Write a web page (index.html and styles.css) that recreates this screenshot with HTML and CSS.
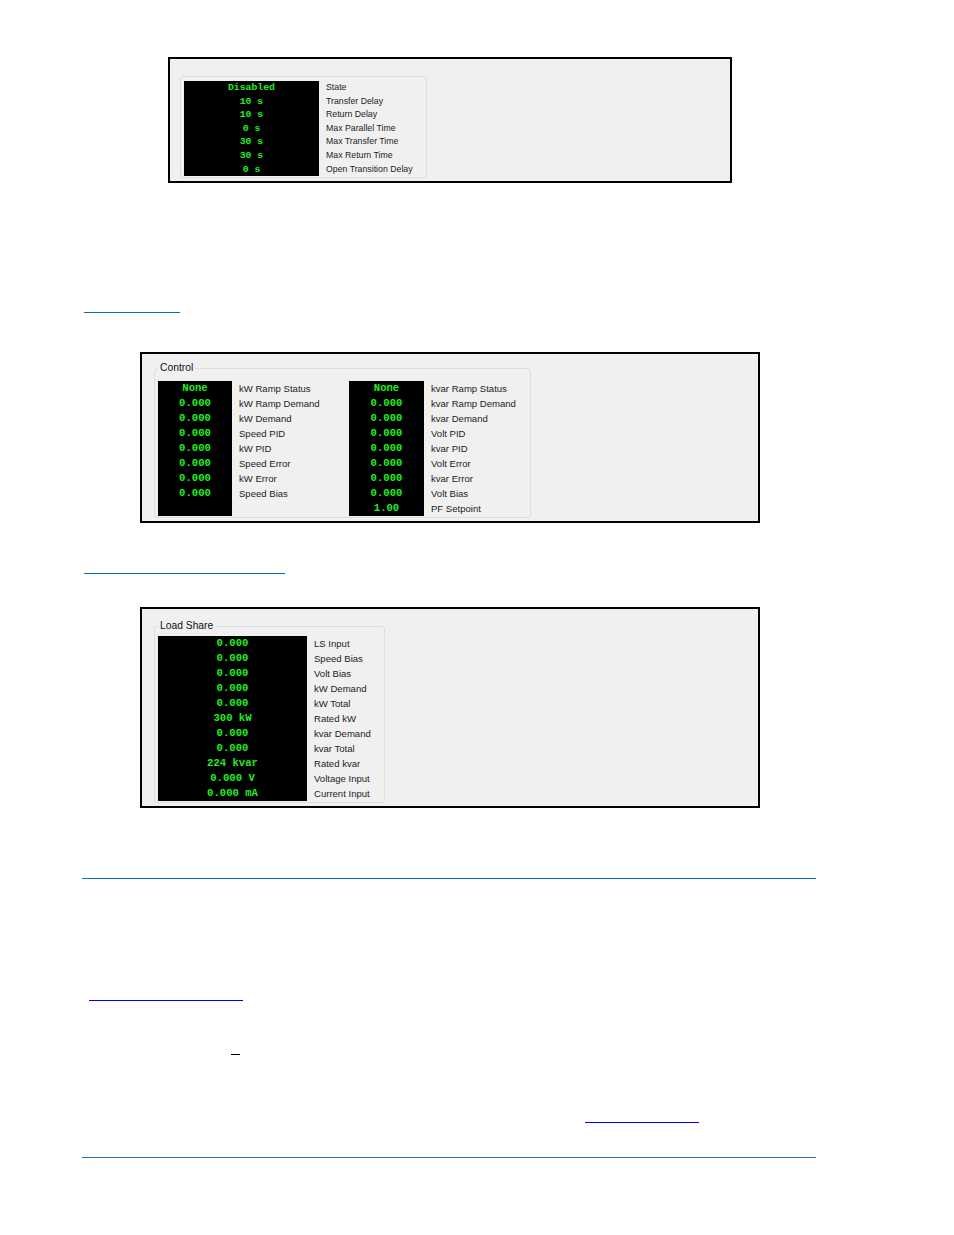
FILE: index.html
```html
<!DOCTYPE html>
<html lang="en">

<head>
  <meta charset="UTF-8">
  <title>Transfer / Control / Load Share</title>
  <link rel="stylesheet" href="styles.css">
</head>

<body>
  <!-- transfer settings -->
  <div class="panel panel-transfer">
    <div class="group group-plain">
      <div class="readout">
        <div class="screen screen-transfer">
          <div>Disabled</div>
          <div>10 s</div>
          <div>10 s</div>
          <div>0 s</div>
          <div>30 s</div>
          <div>30 s</div>
          <div>0 s</div>
        </div>
        <div class="names names-transfer">
          <div>State</div>
          <div>Transfer Delay</div>
          <div>Return Delay</div>
          <div>Max Parallel Time</div>
          <div>Max Transfer Time</div>
          <div>Max Return Time</div>
          <div>Open Transition Delay</div>
        </div>
      </div>
    </div>
  </div>

  <div class="link link-a"></div>

  <!-- control -->
  <div class="panel panel-control">
    <fieldset class="group group-control">
      <legend>Control</legend>
      <div class="cols">
        <div class="readout col-kw">
          <div class="screen screen-kw">
            <div>None</div>
            <div>0.000</div>
            <div>0.000</div>
            <div>0.000</div>
            <div>0.000</div>
            <div>0.000</div>
            <div>0.000</div>
            <div>0.000</div>
          </div>
          <div class="names">
            <div>kW Ramp Status</div>
            <div>kW Ramp Demand</div>
            <div>kW Demand</div>
            <div>Speed PID</div>
            <div>kW PID</div>
            <div>Speed Error</div>
            <div>kW Error</div>
            <div>Speed Bias</div>
          </div>
        </div>
        <div class="readout">
          <div class="screen screen-kvar">
            <div>None</div>
            <div>0.000</div>
            <div>0.000</div>
            <div>0.000</div>
            <div>0.000</div>
            <div>0.000</div>
            <div>0.000</div>
            <div>0.000</div>
            <div>1.00</div>
          </div>
          <div class="names">
            <div>kvar Ramp Status</div>
            <div>kvar Ramp Demand</div>
            <div>kvar Demand</div>
            <div>Volt PID</div>
            <div>kvar PID</div>
            <div>Volt Error</div>
            <div>kvar Error</div>
            <div>Volt Bias</div>
            <div>PF Setpoint</div>
          </div>
        </div>
      </div>
    </fieldset>
  </div>

  <div class="link link-b"></div>

  <!-- load share -->
  <div class="panel panel-load">
    <fieldset class="group group-load">
      <legend>Load Share</legend>
      <div class="readout">
        <div class="screen screen-load">
          <div>0.000</div>
          <div>0.000</div>
          <div>0.000</div>
          <div>0.000</div>
          <div>0.000</div>
          <div>300 kW</div>
          <div>0.000</div>
          <div>0.000</div>
          <div>224 kvar</div>
          <div>0.000 V</div>
          <div>0.000 mA</div>
        </div>
        <div class="names">
          <div>LS Input</div>
          <div>Speed Bias</div>
          <div>Volt Bias</div>
          <div>kW Demand</div>
          <div>kW Total</div>
          <div>Rated kW</div>
          <div>kvar Demand</div>
          <div>kvar Total</div>
          <div>Rated kvar</div>
          <div>Voltage Input</div>
          <div>Current Input</div>
        </div>
      </div>
    </fieldset>
  </div>

  <div class="rule rule-top"></div>
  <div class="link link-c"></div>
  <div class="dash"></div>
  <div class="link link-d"></div>
  <div class="rule rule-bottom"></div>
</body>

</html>
```

FILE: styles.css
```css
* {
  margin: 0;
  padding: 0;
  box-sizing: border-box;
}

body {
  background: #fff;
  font-family: "Liberation Sans", Arial, sans-serif;
  color: #1c1c1c;
  padding-bottom: 77px;
}

/* grey dialog panels */
.panel {
  background: #f0f0f0;
  border: 2px solid #000;
}

.panel-transfer {
  margin: 57px 0 0 168px;
  width: 564px;
  height: 126px;
  padding: 17px 0 0 10px;
}

.panel-control {
  margin: 39px 0 0 140px;
  width: 620px;
  height: 171px;
  padding: 8px 0 0 12px;
}

.panel-load {
  margin: 33px 0 0 140px;
  width: 620px;
  height: 201px;
  padding: 11px 0 0 12px;
}

.group {
  border: 1px solid #d5dfe5;
  border-radius: 3px;
}

.group-plain {
  width: 247px;
  height: 102px;
  padding: 4px 3px 0;
}

fieldset.group {
  margin: 0;
  min-inline-size: 0;
  padding: 7px 3px 1px;
}

legend {
  padding: 0 2px;
  font-size: 10.3px;
  line-height: 12px;
  color: #111;
}

fieldset.group-control {
  width: 377px;
}

fieldset.group-load {
  width: 231px;
  padding-top: 4px;
}

.cols {
  display: flex;
}

.readout {
  display: flex;
}

.col-kw {
  width: 191px;
}

/* black meter screens */
.screen {
  background: #000;
  color: #1fef1f;
  font-family: "Liberation Mono", "DejaVu Sans Mono", monospace;
  font-weight: bold;
  font-size: 10.6px;
  line-height: 15px;
  text-align: center;
  white-space: nowrap;
}

.screen-transfer {
  width: 135px;
  height: 95px;
  font-size: 9.8px;
  line-height: 13.6px;
}

.screen-kw {
  width: 74px;
}

.screen-kvar {
  width: 75px;
}

.screen-load {
  width: 149px;
}

.names {
  margin-left: 7px;
  font-size: 9.55px;
  line-height: 15px;
  white-space: nowrap;
}

.names-transfer {
  font-size: 8.75px;
  line-height: 13.6px;
}

/* empty hyperlinks and rules */
.link {
  height: 0;
  border-bottom: 1px solid #0070c0;
}

.link-a {
  margin: 129px 0 0 84px;
  width: 96px;
}

.link-b {
  margin: 50px 0 0 84px;
  width: 201px;
}

.link-c {
  margin: 121px 0 0 89px;
  width: 154px;
  border-color: #0000ff;
}

.link-d {
  margin: 67px 0 0 585px;
  width: 114px;
  border-color: #0000ff;
}

.dash {
  margin: 53px 0 0 231px;
  width: 9px;
  height: 0;
  border-bottom: 1px solid #000;
}

.rule {
  height: 0;
  margin-left: 82px;
  width: 734px;
  border-bottom: 1px solid #0070c0;
}

.rule-top {
  margin-top: 70px;
}

.rule-bottom {
  margin-top: 34px;
  border-color: #2e6fb3;
}
```
